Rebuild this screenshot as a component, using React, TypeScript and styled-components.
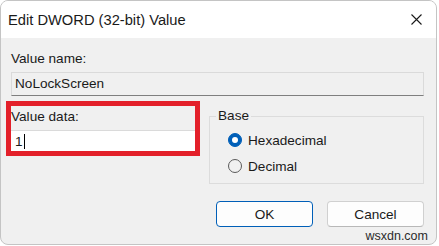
import React from "react";
import styled, {createGlobalStyle} from "styled-components";

const GlobalStyle = createGlobalStyle`
  html, body {
    margin: 0;
    padding: 0;
    background: #ffffff;
  }
  body {
    font-family: "Segoe UI", "Liberation Sans", Arial, sans-serif;
    color: #1a1a1a;
  }
`;

const Window = styled.div`
  position: relative;
  box-sizing: border-box;
  width: 437px;
  height: 245px;
  border: 1px solid #c4c4c4;
  border-radius: 8px;
  overflow: hidden;
  display: flex;
  flex-direction: column;
  background: #f0f0f0;
`;

const TitleBar = styled.div`
  height: 37px;
  flex: none;
  background: #ffffff;
  display: flex;
  align-items: center;
  justify-content: space-between;
  padding: 0 14px 0 7px;
`;

const Title = styled.span`
  font-size: 14.7px;
  color: #1a1a1a;
`;

const CloseButton = styled.div`
  width: 12px;
  height: 12px;
  display: flex;
  align-items: center;
  justify-content: center;
`;

const Body = styled.div`
  flex: 1;
  display: flex;
  flex-direction: column;
  padding: 12px 12px 0 10px;
`;

const Label = styled.div`
  font-size: 13.6px;
  line-height: 18px;
  height: 18px;
  color: #1a1a1a;
`;

const NameBox = styled.div`
  box-sizing: border-box;
  margin-top: 4px;
  height: 24px;
  border: 1px solid #dadada;
  border-bottom-color: #7f7f7f;
  background: #f0f0f0;
  font-size: 13.6px;
  line-height: 22px;
  padding-left: 3px;
`;

const Row = styled.div`
  display: flex;
  gap: 14px;
  margin-top: 10px;
`;

const DataField = styled.div`
  width: 184px;
  height: 45px;
  padding-top: 2px;
  box-sizing: border-box;
  display: flex;
  flex-direction: column;
  gap: 4px;
  outline: 5px solid #e3202a;
`;

const DataInput = styled.div`
  height: 21px;
  background: #ffffff;
  border-top: 1px solid #dadada;
  box-sizing: border-box;
  display: flex;
  align-items: center;
  padding-left: 4px;
  font-size: 13.6px;
`;

const Caret = styled.span`
  display: inline-block;
  width: 1px;
  height: 15px;
  margin-left: 1px;
  background: #000000;
`;

const Group = styled.fieldset`
  flex: 1;
  margin: 2px 0 0 0;
  height: 76px;
  box-sizing: border-box;
  border: 1px solid #dcdcdc;
  padding: 6px 0 0 18px;
  display: flex;
  flex-direction: column;
  gap: 6px;
`;

const Legend = styled.legend`
  font-size: 13.6px;
  line-height: 16px;
  padding: 0 2px;
  margin-left: -12px;
  color: #1a1a1a;
`;

const RadioRow = styled.label`
  display: flex;
  align-items: center;
  gap: 6px;
  height: 20px;
  font-size: 13.6px;
  color: #1a1a1a;
`;

const RadioDot = styled.span<{ $checked?: boolean }>`
  box-sizing: border-box;
  width: 14px;
  height: 14px;
  border-radius: 50%;
  display: flex;
  align-items: center;
  justify-content: center;
  background: ${(p) => (p.$checked ? "#005fb8" : "transparent")};
  border: 1px solid ${(p) => (p.$checked ? "#005fb8" : "#5a5a5a")};
  &::after {
    content: "";
    display: ${(p) => (p.$checked ? "block" : "none")};
    width: 6px;
    height: 6px;
    border-radius: 50%;
    background: #ffffff;
  }
`;

const Buttons = styled.div`
  display: flex;
  justify-content: flex-end;
  gap: 14px;
  margin-top: 17px;
`;

const Button = styled.button<{ $primary?: boolean }>`
  box-sizing: border-box;
  width: 97px;
  height: 26px;
  border-radius: 4px;
  font-family: inherit;
  font-size: 13.6px;
  color: #1a1a1a;
  background: #fdfdfd;
  border: 1px solid ${(p) => (p.$primary ? "#005fb8" : "#d0d0d0")};
  border-bottom-color: ${(p) => (p.$primary ? "#005fb8" : "#b8b8b8")};
  padding: 0;
`;

const Watermark = styled.div`
  position: absolute;
  right: 8px;
  bottom: 1px;
  font-size: 12.5px;
  line-height: 14px;
  color: #2b2b2b;
`;

export default function App() {
    return (
        <>
            <GlobalStyle/>
            <Window>
                <TitleBar>
                    <Title>Edit DWORD (32-bit) Value</Title>
                    <CloseButton>
                        <svg width="11" height="11" viewBox="0 0 11 11">
                            <path d="M0.5 0.5 L10.5 10.5 M10.5 0.5 L0.5 10.5" stroke="#1a1a1a" strokeWidth="1.1"/>
                        </svg>
                    </CloseButton>
                </TitleBar>
                <Body>
                    <Label>Value name:</Label>
                    <NameBox>NoLockScreen</NameBox>
                    <Row>
                        <DataField>
                            <Label>Value data:</Label>
                            <DataInput>1<Caret/></DataInput>
                        </DataField>
                        <Group>
                            <Legend>Base</Legend>
                            <RadioRow><RadioDot $checked/>Hexadecimal</RadioRow>
                            <RadioRow><RadioDot/>Decimal</RadioRow>
                        </Group>
                    </Row>
                    <Buttons>
                        <Button $primary>OK</Button>
                        <Button>Cancel</Button>
                    </Buttons>
                </Body>
                <Watermark>wsxdn.com</Watermark>
            </Window>
        </>
    );
}
